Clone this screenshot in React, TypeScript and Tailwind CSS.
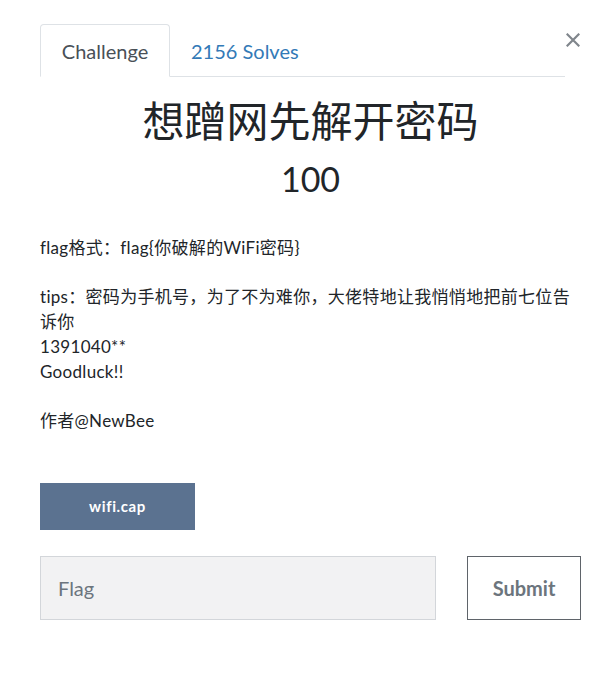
import React from "react";

const font = { fontFamily: "Lato, 'Noto Sans CJK SC', sans-serif" };

export default function App() {
  return (
    <div className="relative w-[599px] h-[673px] bg-white text-[#212529]" style={font}>
      <button className="absolute left-[566px] top-[33px] w-[14px] h-[14px] flex items-center justify-center">
        <svg width="14" height="14" viewBox="0 0 14 14">
          <path d="M1.5 1.5 L12.5 12.5 M12.5 1.5 L1.5 12.5" stroke="#80868c" strokeWidth="2.2" strokeLinecap="square" />
        </svg>
      </button>
      <div className="pl-[40px] pr-[18px] pt-[24px]">
        <ul className="flex w-[525px] border-b border-[#dee2e6]">
          <li className="-mb-px h-[53px] w-[130px] flex items-center justify-center pt-[1px] rounded-t-[4px] border border-[#dee2e6] border-b-white bg-white text-[20px] text-[#495057]">
            Challenge
          </li>
          <li className="h-[52px] flex items-center pt-[1px] pl-[21px] text-[20px] text-[#337ab7]">2156 Solves</li>
        </ul>
        <h2 className="mt-[19px] text-center text-[42px] leading-[50px] font-normal text-[#212529]">想蹭网先解开密码</h2>
        <h3 className="mt-[14px] text-center text-[34px] leading-[38px] font-normal text-[#212529]">100</h3>
        <div className="mt-[37px] text-[17px] leading-[25px] w-[540px] tracking-[0.3px]">
          <p className="mb-6">flag格式：flag{"{"}你破解的WiFi密码{"}"}</p>
          <p className="mb-6">
            tips：密码为手机号，为了不为难你，大佬特地让我悄悄地把前七位告诉你
            <br />
            1391040**
            <br />
            Goodluck!!
          </p>
          <p>作者@NewBee</p>
        </div>
        <div className="mt-[50px]">
          <button className="w-[155px] h-[47px] bg-[#5b7290] text-white text-[15px] font-bold tracking-[0.6px] [font-variant-ligatures:none] flex items-center justify-center">
            wifi.cap
          </button>
        </div>
        <div className="mt-[26px] flex gap-[31px]">
          <input
            placeholder="Flag"
            className="w-[396px] h-[64px] bg-[#f2f2f3] border border-[#d3d6da] px-[17px] text-[20px] text-[#495057] placeholder:text-[#6c757d] outline-none"
            style={font}
          />
          <button className="w-[114px] h-[64px] border border-[#5f646a] bg-white text-[20px] font-bold text-[#6c757d]">
            Submit
          </button>
        </div>
      </div>
    </div>
  );
}
